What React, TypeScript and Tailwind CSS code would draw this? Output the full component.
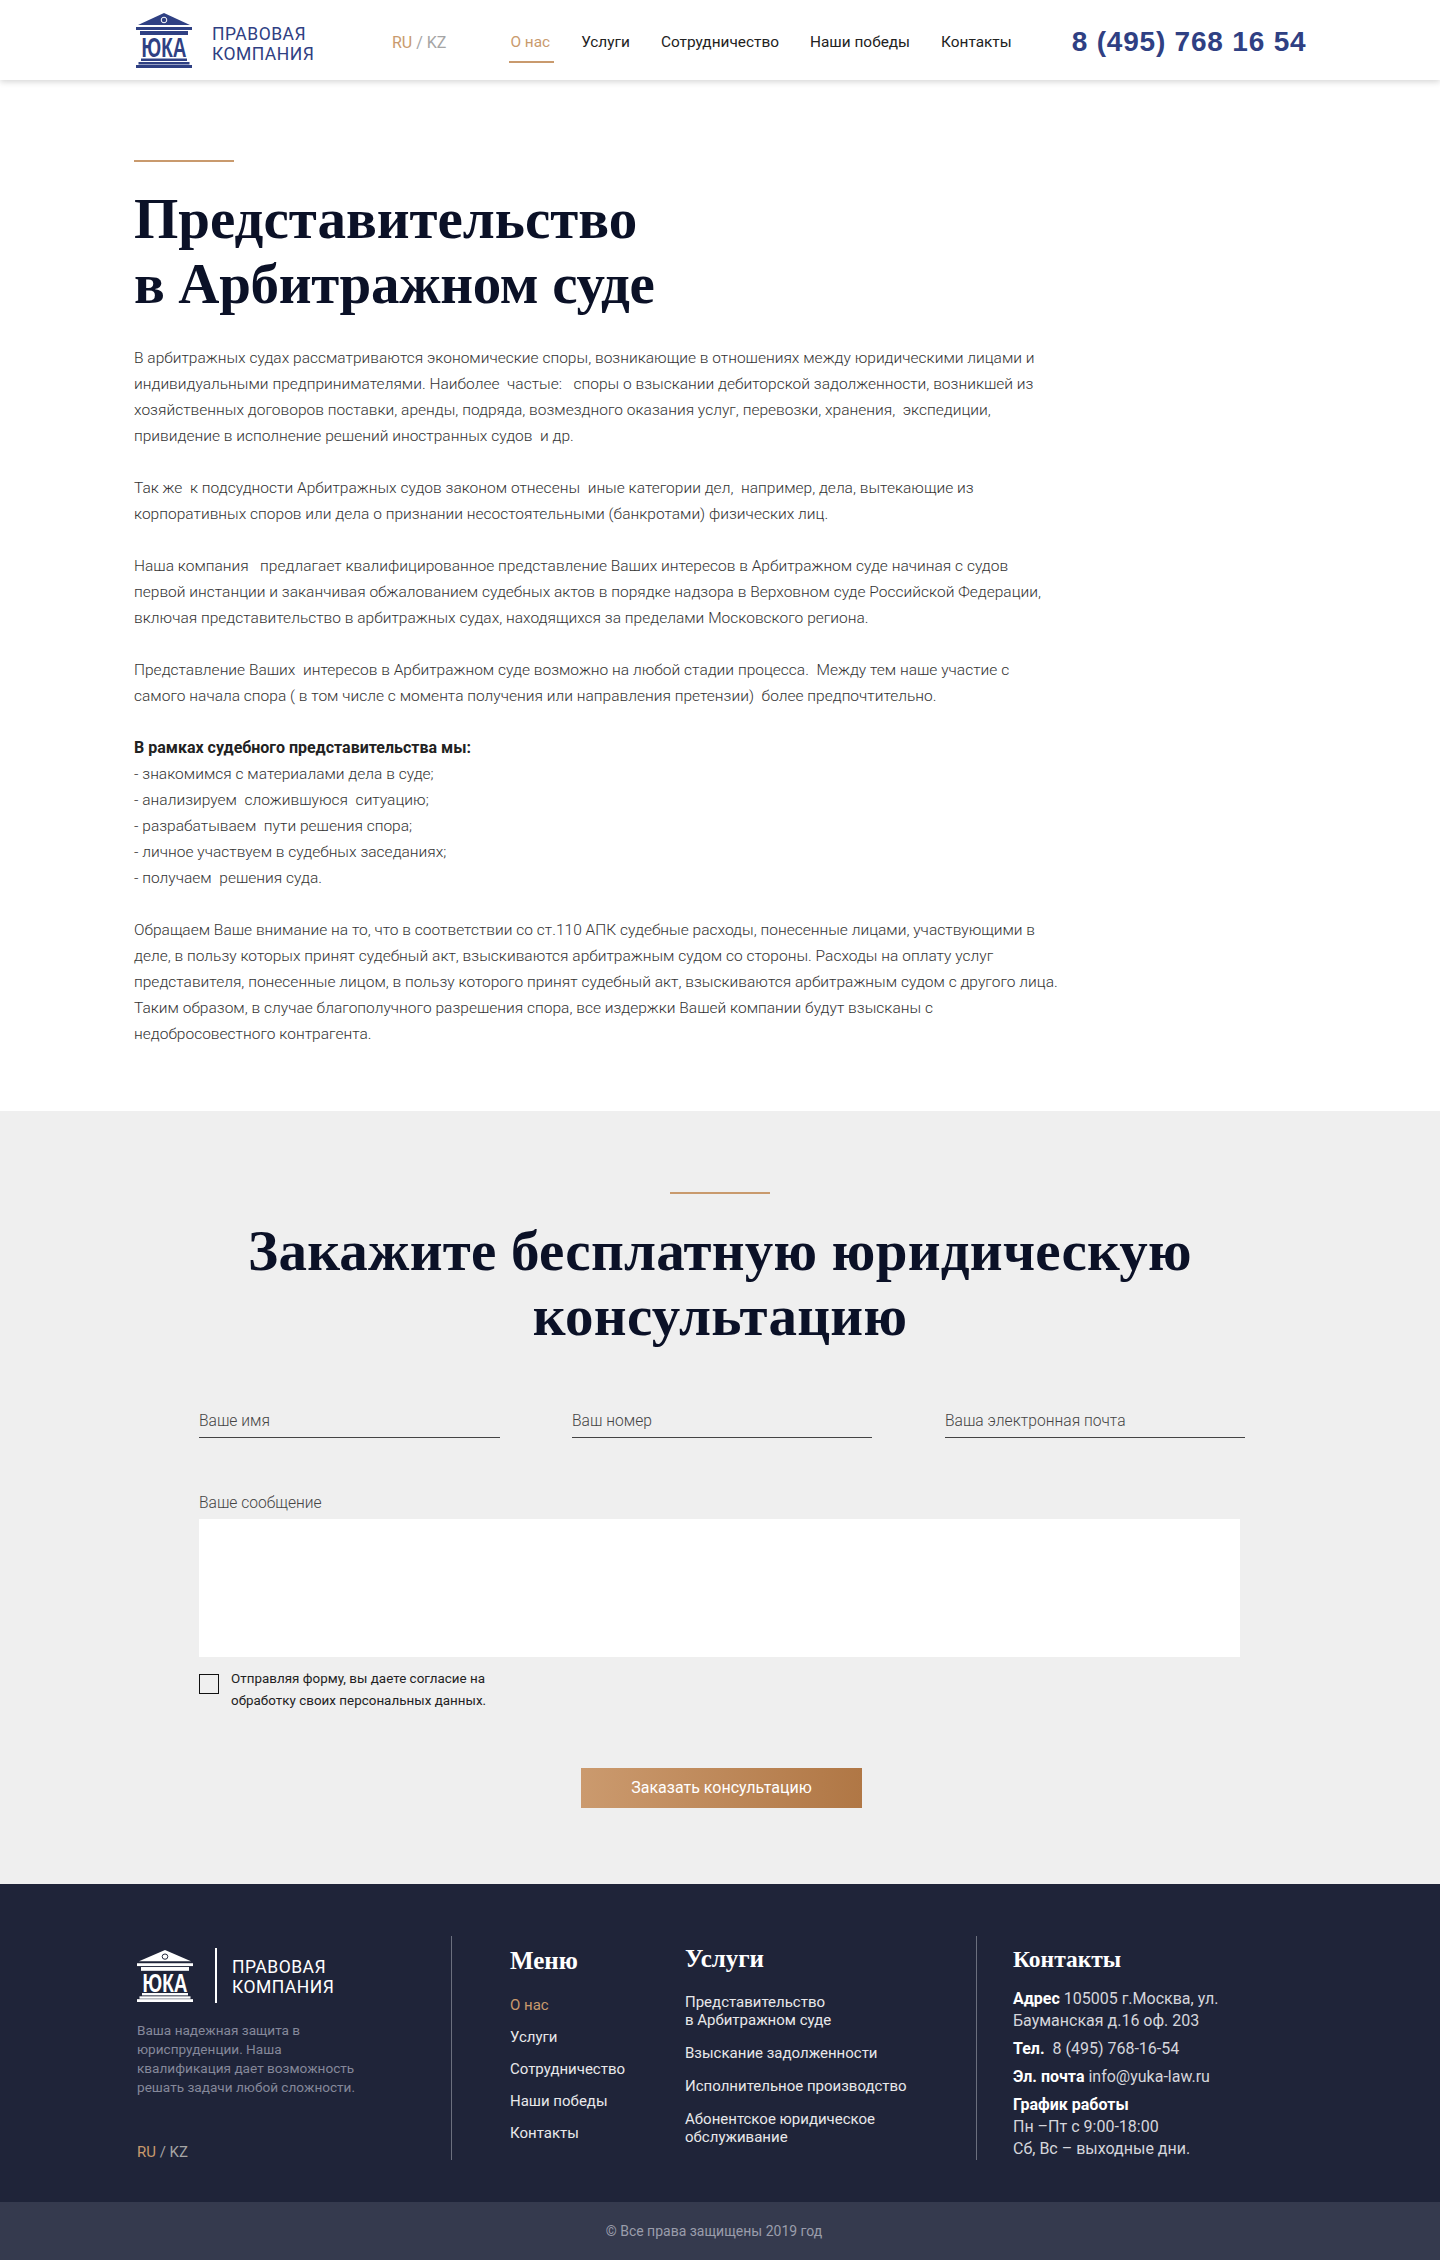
const body = `В арбитражных судах рассматриваются экономические споры, возникающие в отношениях между юридическими лицами и
индивидуальными предпринимателями. Наиболее  частые:   споры о взыскании дебиторской задолженности, возникшей из
хозяйственных договоров поставки, аренды, подряда, возмездного оказания услуг, перевозки, хранения,  экспедиции,
привидение в исполнение решений иностранных судов  и др.

Так же  к подсудности Арбитражных судов законом отнесены  иные категории дел,  например, дела, вытекающие из
корпоративных споров или дела о признании несостоятельными (банкротами) физических лиц.

Наша компания   предлагает квалифицированное представление Ваших интересов в Арбитражном суде начиная с судов
первой инстанции и заканчивая обжалованием судебных актов в порядке надзора в Верховном суде Российской Федерации,
включая представительство в арбитражных судах, находящихся за пределами Московского региона.

Представление Ваших  интересов в Арбитражном суде возможно на любой стадии процесса.  Между тем наше участие с
самого начала спора ( в том числе с момента получения или направления претензии)  более предпочтительно.
`;

const body2 = `- знакомимся с материалами дела в суде;
- анализируем  сложившуюся  ситуацию;
- разрабатываем  пути решения спора;
- личное участвуем в судебных заседаниях;
- получаем  решения суда.

Обращаем Ваше внимание на то, что в соответствии со ст.110 АПК судебные расходы, понесенные лицами, участвующими в
деле, в пользу которых принят судебный акт, взыскиваются арбитражным судом со стороны. Расходы на оплату услуг
представителя, понесенные лицом, в пользу которого принят судебный акт, взыскиваются арбитражным судом с другого лица.
Таким образом, в случае благополучного разрешения спора, все издержки Вашей компании будут взысканы с
недобросовестного контрагента.`;

const nav = ["Услуги", "Сотрудничество", "Наши победы", "Контакты"];

function Logo({ color, hole }: { color: string; hole: string }) {
  return (
    <svg viewBox="0 0 56 55" preserveAspectRatio="none" className="w-full h-full" aria-hidden="true">
      <path d="M28 0 L54 12 H2 Z" fill={color} />
      <circle cx="28" cy="7" r="2.8" fill={color} stroke={hole} strokeWidth="1" />
      <rect x="0" y="14" width="56" height="3" fill={color} />
      <rect x="4" y="18" width="48" height="4" fill={color} />
      <text transform="translate(28 44) scale(0.68 1)" textAnchor="middle" fontFamily="'Liberation Sans', sans-serif" fontWeight="700" fontSize="28" fill={color}>
        ЮКА
      </text>
      <rect x="5" y="45.5" width="46" height="2.5" fill={color} />
      <rect x="2.5" y="49" width="51" height="2.5" fill={color} />
      <rect x="0" y="52" width="56" height="3" fill={color} />
    </svg>
  );
}

function Accent() {
  return <div className="h-0.5 w-[100px] bg-[#c99a6d]" />;
}

function Field({ label, className }: { label: string; className: string }) {
  return (
    <input
      placeholder={label}
      className={`h-[33px] shrink-0 border-b border-[#444] bg-transparent text-[15.6px] font-light outline-none placeholder:text-[#444] ${className}`}
    />
  );
}

export default function App() {
  return (
    <div className="w-[1440px] font-['Roboto',sans-serif] text-[15.5px] font-light tracking-[0.02px] text-[#333]">
      <header className="relative flex h-20 items-center bg-white pl-[136px] tracking-normal shadow-[0_2px_6px_rgba(0,0,0,0.16)]">
        <div className="h-[55px] w-14">
          <Logo color="#2f4083" hole="#ffffff" />
        </div>
        <div className="ml-5 mt-2 w-[180px] text-[17.5px] font-normal leading-[20px] tracking-[0.5px] text-[#2f4083]">
          ПРАВОВАЯ
          <br />
          КОМПАНИЯ
        </div>
        <div className="mt-1.5 text-[16px] font-normal text-[#a5a5a5]">
          <span className="text-[#c99a6d]">RU</span> / KZ
        </div>
        <nav className="ml-[64px] mt-1.5 flex gap-[31px] text-[15.4px] font-normal text-[#222]">
          <a className="relative text-[#c99a6d]">
            О нас
            <span className="absolute -bottom-[8px] -left-px -right-1 h-0.5 bg-[#c99a6d]" />
          </a>
          {nav.map((n) => (
            <a key={n}>{n}</a>
          ))}
        </nav>
        <div className="ml-[60px] mt-1 font-['Liberation_Sans',sans-serif] text-[28px] font-bold tracking-[0.8px] text-[#2f4083]">8 (495) 768 16 54</div>
      </header>

      <main className="bg-white pb-[64px] pl-[134px] pt-[80px]">
        <Accent />
        <h1 className="mt-[24px] font-['Liberation_Serif',serif] text-[57px] font-bold leading-[65px] tracking-normal text-[#0b1127]">
          Представительство
          <br />
          <span className="tracking-[-0.33px]">в Арбитражном суде</span>
        </h1>
        <div className="mt-[29px] whitespace-pre leading-[26px]">
          {body}
          {"\n"}
          <b className="text-[16px] font-bold tracking-normal text-[#222]">В рамках судебного представительства мы:</b>
          {"\n"}
          {body2}
        </div>
      </main>

      <section className="bg-[#efefef] pb-[76px] pt-[81px]">
        <div className="flex justify-center">
          <Accent />
        </div>
        <h2 className="mt-[24px] text-center font-['Liberation_Serif',serif] text-[57px] font-bold leading-[65px] tracking-[0.25px] text-[#0b1127]">
          Закажите бесплатную юридическую
          <br />
          консультацию
        </h2>
        <form className="mt-[57px] px-[199px]">
          <div className="flex">
            <Field label="Ваше имя" className="w-[301px]" />
            <Field label="Ваш номер" className="ml-[72px] w-[300px]" />
            <Field label="Ваша электронная почта" className="ml-[73px] w-[300px]" />
          </div>
          <label className="mt-[49px] block text-[15.6px] leading-[32px] text-[#444]">Ваше сообщение</label>
          <textarea className="block h-[138px] w-[1041px] resize-none bg-white outline-none" />
          <div className="mt-[17px] flex">
            <span className="h-5 w-5 border border-[#111]" />
            <p className="-mt-1.5 ml-3 text-[13.4px] font-normal leading-[22px] text-[#222]">
              Отправляя форму, вы даете согласие на
              <br />
              обработку своих персональных данных.
            </p>
          </div>
          <button type="button" className="ml-[382px] mt-[56px] block h-10 w-[281px] bg-gradient-to-r from-[#cb9a6e] to-[#b07745] text-[16px] font-normal tracking-normal text-white">
            Заказать консультацию
          </button>
        </form>
      </section>

      <footer className="bg-[#1f2439] font-normal tracking-normal text-[#e8e8ea]">
        <div className="flex h-[318px] pt-[52px]">
          <div className="h-[224px] w-[452px] shrink-0 border-r border-[#6b6f7e] pl-[137px] pt-3">
            <div className="flex items-center">
              <div className="h-[52px] w-14">
                <Logo color="#ffffff" hole="#1f2439" />
              </div>
              <div className="ml-[22px] h-[55px] w-0.5 bg-white" />
              <div className="ml-[15px] mt-0.5 text-[17.5px] leading-[20px] tracking-[0.5px] text-white">
                ПРАВОВАЯ
                <br />
                КОМПАНИЯ
              </div>
            </div>
            <p className="mt-[18px] text-[13.6px] leading-[19px] text-[#85889a]">
              Ваша надежная защита в
              <br />
              юриспруденции. Наша
              <br />
              квалификация дает возможность
              <br />
              решать задачи любой сложности.
            </p>
            <div className="mt-[44px] text-[15px] text-[#a5a5a5]">
              <span className="text-[#c99a6d]">RU</span> / KZ
            </div>
          </div>
          <div className="ml-[58px] w-[175px] shrink-0">
            <h3 className="mt-[10px] font-['Liberation_Serif',serif] text-[25px] font-bold leading-[30px] text-white">Меню</h3>
            <ul className="mt-[18px] flex flex-col gap-[10px] text-[15px] leading-[22px]">
              <li className="text-[#c99a6d]">О нас</li>
              {nav.map((n) => (
                <li key={n}>{n}</li>
              ))}
            </ul>
          </div>
          <div className="h-[224px] w-[292px] shrink-0 border-r border-[#6b6f7e]">
            <h3 className="mt-2 font-['Liberation_Serif',serif] text-[25px] font-bold leading-[30px] text-white">Услуги</h3>
            <ul className="mt-[19px] flex flex-col gap-[15px] text-[15px] leading-[18px]">
              <li>
                Представительство
                <br />в Арбитражном суде
              </li>
              <li>Взыскание задолженности</li>
              <li>Исполнительное производство</li>
              <li>
                Абонентское юридическое
                <br />
                обслуживание
              </li>
            </ul>
          </div>
          <div className="ml-9 text-[16px] leading-[22px] text-[#d5d6dc]">
            <h3 className="mt-2 font-['Liberation_Serif',serif] text-[23.5px] font-bold leading-[30px] text-white">Контакты</h3>
            <p className="mt-[14px]">
              <b className="text-white">Адрес</b> 105005 г.Москва, ул.
              <br />
              Бауманская д.16 оф. 203
            </p>
            <p className="mt-1.5">
              <b className="text-white">Тел.</b>&nbsp; 8 (495) 768-16-54
            </p>
            <p className="mt-1.5">
              <b className="text-white">Эл. почта</b> info@yuka-law.ru
            </p>
            <p className="mt-1.5">
              <b className="text-white">График работы</b>
              <br />
              Пн –Пт с 9:00-18:00
              <br />
              Сб, Вс – выходные дни.
            </p>
          </div>
        </div>
        <div className="flex h-[58px] items-center justify-center bg-[#353a4e] pr-3 text-[14px] text-[#9a9dab]">© Все права защищены 2019 год</div>
      </footer>
    </div>
  );
}
